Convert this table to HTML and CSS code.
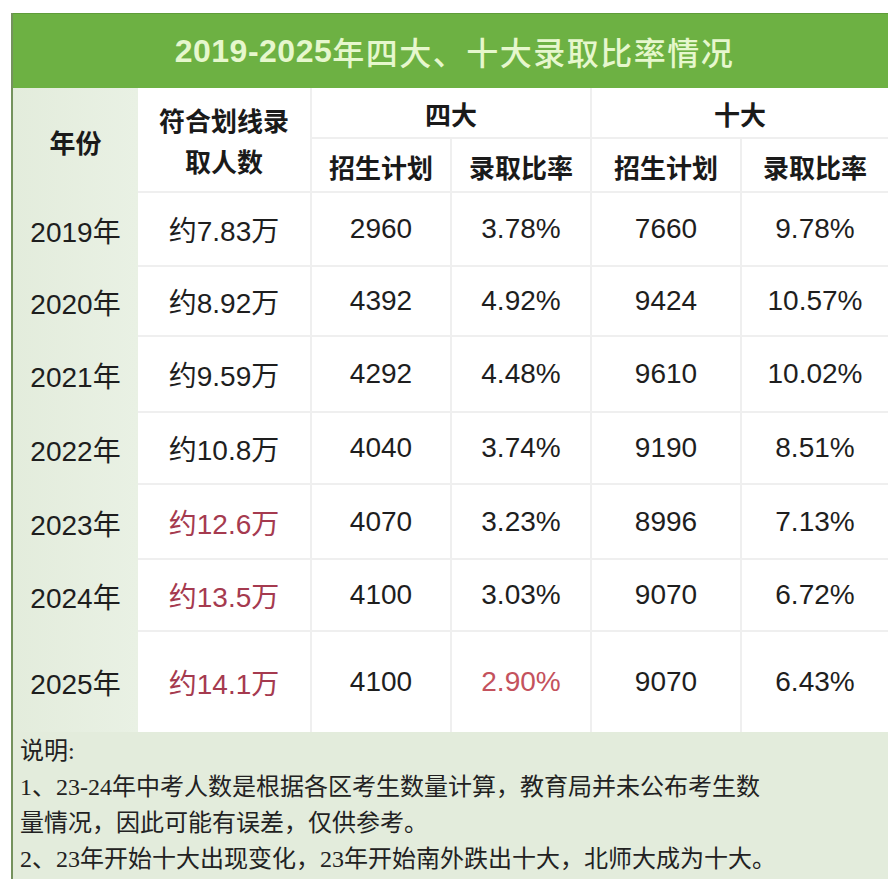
FILE: index.html
```html
<!DOCTYPE html>
<html lang="zh-CN">
<head>
<meta charset="utf-8">
<title>2019-2025年四大、十大录取比率情况</title>
<link rel="stylesheet" href="styles.css">
</head>
<body>
<div class="page">
  <div class="title"><b>2019-2025</b>年四大、十大录取比率情况</div>
  <div class="grid">
    <div class="yr hd span2">年份</div>
    <div class="c hd span2 wrap">符合划线录取人数</div>
    <div class="c hd cs2">四大</div>
    <div class="c hd cs2 last">十大</div>
    <div class="c hd">招生计划</div>
    <div class="c hd">录取比率</div>
    <div class="c hd">招生计划</div>
    <div class="c hd last">录取比率</div>

    <div class="yr">2019年</div><div class="c">约7.83万</div><div class="c">2960</div><div class="c">3.78%</div><div class="c">7660</div><div class="c last">9.78%</div>
    <div class="yr">2020年</div><div class="c">约8.92万</div><div class="c">4392</div><div class="c">4.92%</div><div class="c">9424</div><div class="c last">10.57%</div>
    <div class="yr">2021年</div><div class="c">约9.59万</div><div class="c">4292</div><div class="c">4.48%</div><div class="c">9610</div><div class="c last">10.02%</div>
    <div class="yr">2022年</div><div class="c">约10.8万</div><div class="c">4040</div><div class="c">3.74%</div><div class="c">9190</div><div class="c last">8.51%</div>
    <div class="yr">2023年</div><div class="c red">约12.6万</div><div class="c">4070</div><div class="c">3.23%</div><div class="c">8996</div><div class="c last">7.13%</div>
    <div class="yr">2024年</div><div class="c red">约13.5万</div><div class="c">4100</div><div class="c">3.03%</div><div class="c">9070</div><div class="c last">6.72%</div>
    <div class="yr">2025年</div><div class="c red bot">约14.1万</div><div class="c bot">4100</div><div class="c red2 bot">2.90%</div><div class="c bot">9070</div><div class="c last bot">6.43%</div>
  </div>
  <div class="notes">
    <div class="line">说明:</div>
    <div class="line">1、23-24年中考人数是根据各区考生数量计算，教育局并未公布考生数</div>
    <div class="line">量情况，因此可能有误差，仅供参考。</div>
    <div class="line">2、23年开始十大出现变化，23年开始南外跌出十大，北师大成为十大。</div>
  </div>
</div>
</body>
</html>
```
FILE: styles.css
```css
html, body {
  margin: 0;
  padding: 0;
  background: #ffffff;
}
body {
  width: 888px;
  height: 879px;
  overflow: hidden;
  padding-top: 13px;
  box-sizing: border-box;
  font-family: "Liberation Sans", "Noto Sans CJK SC", sans-serif;
}
.page {
  margin-left: 11px;
  border-left: 2px solid #74925d;
  background: #e3ecdc;
  height: 866px;
}
.title {
  height: 75px;
  background: #6db143;
  border-top: 1px solid #5f9c3a;
  box-sizing: border-box;
  display: flex;
  align-items: center;
  justify-content: center;
  padding-left: 8px;
  color: #e6f7cd;
  font-size: 32px;
  font-family: "Liberation Sans", "Noto Sans CJK SC", sans-serif;
  font-weight: 500;
  letter-spacing: 1.5px;
}
.title b {
  font-weight: 700;
  letter-spacing: 0.5px;
}
.grid {
  display: grid;
  grid-template-columns: 125px 174px 140px 140px 150px 1fr;
  grid-template-rows: 51px 54px 74px 70px 76px 72px 75px 72px 100px;
}
.c {
  display: flex;
  align-items: center;
  justify-content: center;
  background: #ffffff;
  border-right: 2px solid #efefef;
  border-bottom: 2px solid #efefef;
  box-sizing: border-box;
  font-size: 28px;
  color: #1e1e1e;
}
.yr {
  display: flex;
  align-items: center;
  justify-content: center;
  font-size: 28px;
  color: #1e1e1e;
  background: linear-gradient(90deg, #e3ecdc 0%, #e9f1e4 100%);
}
.hd {
  font-family: "Noto Sans CJK SC", sans-serif;
  font-weight: 700;
  font-size: 26px;
  color: #1a1a1a;
  padding-top: 2px;
}
.span2 {
  grid-row: span 2;
}
.cs2 {
  grid-column: span 2;
}
.wrap {
  text-align: center;
  line-height: 41px;
  padding: 0 20px;
}
.last {
  border-right: none;
}
.bot {
  border-bottom: none;
}
.red {
  color: #a53a4f;
}
.red2 {
  color: #c4525d;
}
.notes {
  padding: 1px 0 0 7px;
  font-family: "Liberation Serif", "Noto Sans CJK SC", serif;
  font-size: 24px;
  line-height: 36px;
  color: #222222;
}
.line {
  white-space: nowrap;
}
```
